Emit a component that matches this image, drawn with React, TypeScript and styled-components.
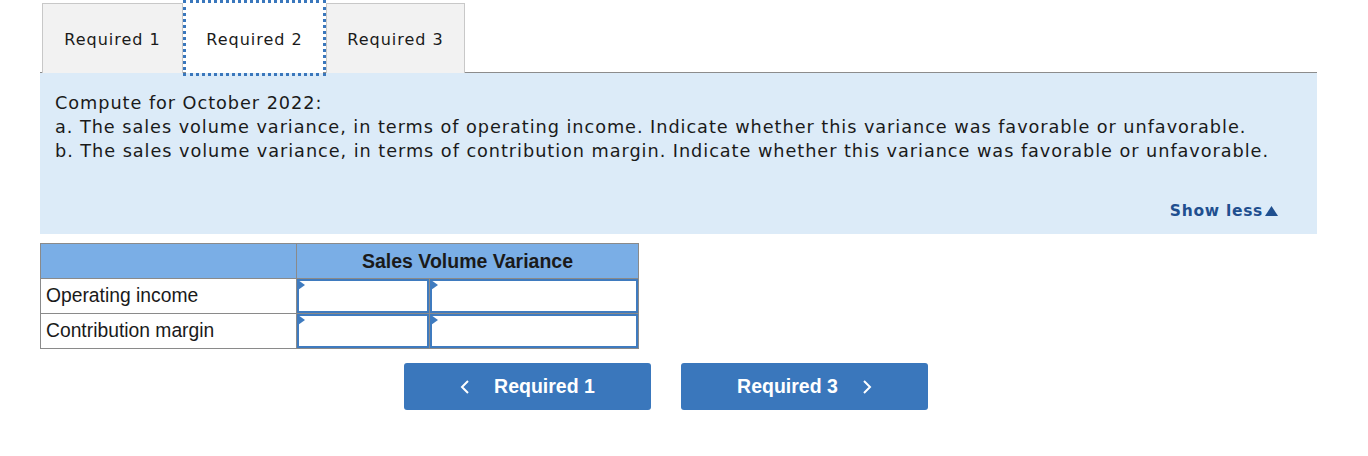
import React from "react";
import styled, { createGlobalStyle } from "styled-components";

const Global = createGlobalStyle`
  html, body { margin: 0; padding: 0; background: #ffffff; }
  body { font-family: "DejaVu Sans", Verdana, sans-serif; }
`;

const Page = styled.div`
  padding: 3px 51px 0 40px;
  width: 1277px;
`;

const TabBar = styled.div`
  display: flex;
  padding-left: 2px;
  border-bottom: 1px solid #8c8c8c;
`;

const Tab = styled.div<{ $active?: boolean; $w: number }>`
  box-sizing: border-box;
  height: 70px;
  width: ${(p) => p.$w}px;
  display: flex;
  align-items: center;
  justify-content: center;
  padding-top: 2px;
  font-family: "DejaVu Sans", Verdana, sans-serif;
  font-size: 16px;
  letter-spacing: 1px;
  color: #1a1a1a;
  background: ${(p) => (p.$active ? "#ffffff" : "#f2f2f2")};
  border: 1px solid #c8c8c8;
  border-bottom: none;
  margin-bottom: -1px;
  ${(p) =>
    p.$active
      ? `outline: 3px dotted #3a77bc; outline-offset: 0; border-color: #ffffff; margin: 0 3px -1px 3px; height: 70px;`
      : ""}
`;

const Panel = styled.div`
  background: #dcebf8;
  padding: 18px 15px 14px 15px;
  display: flex;
  flex-direction: column;
`;

const Question = styled.div`
  font-family: "DejaVu Sans", Verdana, sans-serif;
  font-size: 17.7px;
  letter-spacing: 0.95px;
  line-height: 24px;
  color: #1a1a1a;
`;

const ShowLess = styled.div`
  align-self: flex-end;
  margin-top: 39px;
  margin-right: 23px;
  font-family: "DejaVu Sans", Verdana, sans-serif;
  font-weight: bold;
  font-size: 15.5px;
  letter-spacing: 0.7px;
  color: #1f4f8f;
  display: flex;
  align-items: center;
  gap: 1px;
`;

const Table = styled.table`
  margin-top: 9px;
  border-collapse: collapse;
  font-family: "Liberation Sans", Arial, sans-serif;
`;

const HeadCell = styled.th`
  background: #7aaee6;
  border: 1px solid #8a8a8a;
  height: 34px;
  padding: 0;
  font-size: 19.5px;
  font-weight: bold;
  color: #1a1a1a;
`;

const LabelCell = styled.td`
  border: 1px solid #8a8a8a;
  width: 250px;
  height: 34px;
  padding: 0 0 0 5px;
  font-size: 19.3px;
  color: #1a1a1a;
`;

const InputCell = styled.td<{ $w: number }>`
  border: 1px solid #8a8a8a;
  padding: 0;
  width: ${(p) => p.$w}px;
  height: 34px;
  position: relative;
`;

const InputBox = styled.div`
  position: relative;
  box-sizing: border-box;
  height: 34px;
  border: 2px solid #3f7bbf;
  background: #ffffff;
  &::before {
    content: "";
    position: absolute;
    left: -1px;
    top: -1px;
    border-top: 5px solid transparent;
    border-bottom: 5px solid transparent;
    border-left: 7px solid #3f7bbf;
  }
`;

const Nav = styled.div`
  display: flex;
  gap: 30px;
  margin-top: 14px;
  padding-left: 364px;
`;

const NavButton = styled.button`
  width: 247px;
  height: 47px;
  border: none;
  border-radius: 3px;
  background: #3a77bc;
  color: #ffffff;
  font-family: "Liberation Sans", Arial, sans-serif;
  font-weight: bold;
  font-size: 19.5px;
  display: flex;
  align-items: center;
  justify-content: center;
  gap: 24px;
  cursor: pointer;
`;

const Chevron = ({ dir }: { dir: "left" | "right" }) => (
  <svg width="10" height="16" viewBox="0 0 10 16" fill="none">
    <path
      d={dir === "left" ? "M8 2 L2 8 L8 14" : "M2 2 L8 8 L2 14"}
      stroke="#ffffff"
      strokeWidth="2"
    />
  </svg>
);

export default function App() {
  return (
    <>
      <Global />
      <Page>
        <TabBar>
          <Tab $w={141}>Required 1</Tab>
          <Tab $w={137} $active>Required 2</Tab>
          <Tab $w={139}>Required 3</Tab>
        </TabBar>
        <Panel>
          <Question>
            Compute for October 2022:
            <br />
            a. The sales volume variance, in terms of operating income. Indicate whether this variance was favorable or unfavorable.
            <br />
            b. The sales volume variance, in terms of contribution margin. Indicate whether this variance was favorable or unfavorable.
          </Question>
          <ShowLess>
            Show less
            <svg width="15" height="12" viewBox="0 0 15 12">
              <path d="M7.5 1 L14 11 L1 11 Z" fill="#1f4f8f" />
            </svg>
          </ShowLess>
        </Panel>
        <Table>
          <thead>
            <tr>
              <HeadCell />
              <HeadCell colSpan={2}>Sales Volume Variance</HeadCell>
            </tr>
          </thead>
          <tbody>
            <tr>
              <LabelCell>Operating income</LabelCell>
              <InputCell $w={132}><InputBox /></InputCell>
              <InputCell $w={208}><InputBox /></InputCell>
            </tr>
            <tr>
              <LabelCell>Contribution margin</LabelCell>
              <InputCell $w={132}><InputBox /></InputCell>
              <InputCell $w={208}><InputBox /></InputCell>
            </tr>
          </tbody>
        </Table>
        <Nav>
          <NavButton>
            <Chevron dir="left" />
            Required 1
          </NavButton>
          <NavButton>
            Required 3
            <Chevron dir="right" />
          </NavButton>
        </Nav>
      </Page>
    </>
  );
}
